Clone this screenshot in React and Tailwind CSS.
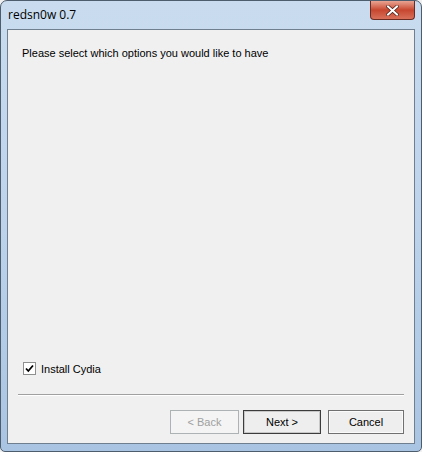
import React from 'react';

function Button({ children, disabled, primary }) {
  return (
    <div
      className={
        'flex items-center justify-center h-[24px] border text-[11px] ' +
        (disabled
          ? 'w-[69px] border-[#adb2b5] bg-[#f4f4f4] text-[#a0a0a0]'
          : primary
          ? 'w-[78px] border-[#3c3c3c] bg-[#eeeeee] text-[#000] shadow-[inset_0_0_0_1px_#c8c8c8]'
          : 'w-[76px] border-[#707070] bg-[#eeeeee] text-[#000] shadow-[inset_0_0_0_1px_#fafafa]')
      }
    >
      {children}
    </div>
  );
}

export default function App() {
  return (
    <div className="w-[422px] h-[452px] bg-[#f0f0f0] font-['Liberation_Sans',sans-serif]">
      {/* Window frame */}
      <div className="w-full h-full flex flex-col rounded-t-[7px] rounded-b-[5px] border border-[#4e5d6e] bg-gradient-to-b from-[#c9dcef] via-[#bcd3eb] to-[#a9c4e2] overflow-hidden">
        {/* Title bar */}
        <div className="h-[28px] flex items-start justify-between">
          <div className="pl-[7px] pt-[6px] text-[12px] text-black font-['Open_Sans',sans-serif] leading-[16px]">
            redsn0w 0.7
          </div>
          <div className="mr-[6px] w-[45px] h-[19px] rounded-b-[4px] border border-t-0 border-[#6b2b22] bg-gradient-to-b from-[#e8a493] via-[#c7462f] to-[#d8705a] flex items-center justify-center">
            <svg width="13" height="11" viewBox="0 0 13 11">
              <path d="M2 1.5 L11 9.5 M11 1.5 L2 9.5" stroke="#4a1d16" strokeWidth="3.4" strokeLinecap="square" />
              <path d="M2 1.5 L11 9.5 M11 1.5 L2 9.5" stroke="#ffffff" strokeWidth="2" strokeLinecap="square" />
            </svg>
          </div>
        </div>

        {/* Client area */}
        <div className="mx-[6px] mb-[7px] flex-1 flex flex-col border border-[#6f7f90] bg-[#f0f0f0]">
          <div className="px-[14px] pt-[16px] text-[11px] text-black leading-[14px]">
            Please select which options you would like to have
          </div>

          <div className="flex-1" />

          <div className="flex items-center gap-[5px] pl-[15px] mb-[17px]">
            <div className="w-[13px] h-[13px] border border-[#8e8f8f] bg-white flex items-center justify-center">
              <svg width="9" height="9" viewBox="0 0 9 9">
                <path d="M1 4.5 L3.3 7 L8 1.5" stroke="#000" strokeWidth="1.8" fill="none" />
              </svg>
            </div>
            <span className="text-[11px] text-black">Install Cydia</span>
          </div>

          <div className="mx-[10px] h-[2px] border-t border-[#a0a0a0] border-b-white border-b" />

          <div className="flex justify-end pr-[10px] pt-[14px] pb-[9px]">
            <Button disabled>&lt; Back</Button>
            <div className="w-[4px]" />
            <Button primary>Next &gt;</Button>
            <div className="w-[7px]" />
            <Button>Cancel</Button>
          </div>
        </div>
      </div>
    </div>
  );
}
